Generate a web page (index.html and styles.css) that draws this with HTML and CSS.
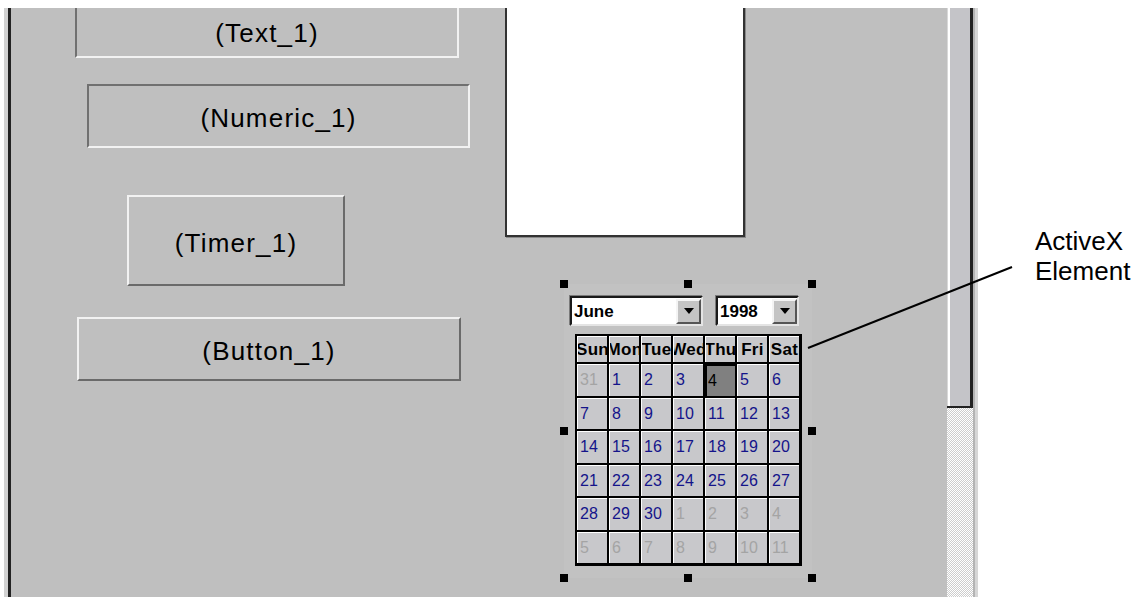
FILE: index.html
```html
<!DOCTYPE html>
<html lang="en">

<head>
    <meta charset="UTF-8">
    <meta name="viewport" content="width=device-width, initial-scale=1.0">
    <title>Form Designer</title>

    <link rel="stylesheet" href="styles.css">

</head>

<body>
    <div class="screen">
        <div class="window">
            <div class="canvas">
                <div class="control sunken text-box">(Text_1)</div>
                <div class="control sunken numeric-box">(Numeric_1)</div>
                <div class="control raised timer-box">(Timer_1)</div>
                <div class="control raised button-box">(Button_1)</div>

                <div class="picture"></div>

                <div class="activex">
                    <span class="handle h-tl"></span>
                    <span class="handle h-tc"></span>
                    <span class="handle h-tr"></span>
                    <span class="handle h-ml"></span>
                    <span class="handle h-mr"></span>
                    <span class="handle h-bl"></span>
                    <span class="handle h-bc"></span>
                    <span class="handle h-br"></span>

                    <div class="pickers">
                        <div class="combo month"><span>June</span><i class="drop"></i></div>
                        <div class="combo year"><span>1998</span><i class="drop"></i></div>
                    </div>

                    <div class="days">
                        <div class="head">Sun</div>
                        <div class="head">Mon</div>
                        <div class="head">Tue</div>
                        <div class="head">Wed</div>
                        <div class="head">Thu</div>
                        <div class="head">Fri</div>
                        <div class="head">Sat</div>

                        <div class="day other">31</div>
                        <div class="day">1</div>
                        <div class="day">2</div>
                        <div class="day">3</div>
                        <div class="day sel">4</div>
                        <div class="day">5</div>
                        <div class="day">6</div>

                        <div class="day">7</div>
                        <div class="day">8</div>
                        <div class="day">9</div>
                        <div class="day">10</div>
                        <div class="day">11</div>
                        <div class="day">12</div>
                        <div class="day">13</div>

                        <div class="day">14</div>
                        <div class="day">15</div>
                        <div class="day">16</div>
                        <div class="day">17</div>
                        <div class="day">18</div>
                        <div class="day">19</div>
                        <div class="day">20</div>

                        <div class="day">21</div>
                        <div class="day">22</div>
                        <div class="day">23</div>
                        <div class="day">24</div>
                        <div class="day">25</div>
                        <div class="day">26</div>
                        <div class="day">27</div>

                        <div class="day">28</div>
                        <div class="day">29</div>
                        <div class="day">30</div>
                        <div class="day other">1</div>
                        <div class="day other">2</div>
                        <div class="day other">3</div>
                        <div class="day other">4</div>

                        <div class="day other">5</div>
                        <div class="day other">6</div>
                        <div class="day other">7</div>
                        <div class="day other">8</div>
                        <div class="day other">9</div>
                        <div class="day other">10</div>
                        <div class="day other">11</div>
                    </div>
                </div>
            </div>

            <div class="scrollbar">
                <div class="thumb"></div>
                <div class="track"></div>
            </div>
        </div>

        <svg class="callout" width="1142" height="597" viewBox="0 0 1142 597">
            <line x1="808" y1="348" x2="1012" y2="267" stroke="#000" stroke-width="2" />
        </svg>

        <div class="label">ActiveX<br>Element</div>
    </div>
</body>

</html>
```

FILE: styles.css
```css
body {
    margin: 0;
    background: #fff;
    font-family: "Liberation Sans", Arial, sans-serif;
}

.screen {
    position: relative;
    width: 1142px;
    height: 597px;
    overflow: hidden;
}

/* designer window */
.window {
    position: absolute;
    left: 4px;
    top: 8px;
    height: 589px;
    display: flex;
    border-left: 4px solid #d2d2d2;
    border-right: 3px solid #d6d6d6;
}

.canvas {
    position: relative;
    width: 936px;
    background: #bfbfbf;
    border-left: 3px solid #222;
    overflow: hidden;
}

.control {
    position: absolute;
    box-sizing: border-box;
    display: flex;
    align-items: center;
    justify-content: center;
    padding-top: 5px;
    font-size: 26px;
    letter-spacing: 1.2px;
    color: #000;
}

.sunken {
    border: 2px solid;
    border-color: #707070 #f2f2f2 #f2f2f2 #707070;
}

.raised {
    border: 2px solid;
    border-color: #f2f2f2 #6a6a6a #6a6a6a #f2f2f2;
}

.text-box {
    left: 64px;
    top: -4px;
    width: 384px;
    height: 54px;
}

.numeric-box {
    left: 76px;
    top: 76px;
    width: 383px;
    height: 64px;
}

.timer-box {
    left: 116px;
    top: 187px;
    width: 218px;
    height: 91px;
}

.button-box {
    left: 66px;
    top: 309px;
    width: 384px;
    height: 64px;
}

.picture {
    position: absolute;
    left: 494px;
    top: -4px;
    width: 240px;
    height: 233px;
    box-sizing: border-box;
    background: #fff;
    border: 2px solid #333;
    border-top: none;
    box-shadow: 1px 1px 0 #8a8a8a;
}

/* calendar control */
.activex {
    position: absolute;
    left: 553px;
    top: 276px;
    width: 248px;
    height: 294px;
    box-sizing: border-box;
    padding: 12px 0 0 6px;
    background: #c2c2c2;
}

.handle {
    position: absolute;
    width: 8px;
    height: 8px;
    background: #000;
}

.h-tl, .h-ml, .h-bl { left: -4px; }
.h-tc, .h-bc { left: 120px; }
.h-tr, .h-mr, .h-br { left: 244px; }
.h-tl, .h-tc, .h-tr { top: -4px; }
.h-ml, .h-mr { top: 143px; }
.h-bl, .h-bc, .h-br { top: 290px; }

.pickers {
    display: flex;
    gap: 13px;
    height: 30px;
}

.combo {
    box-sizing: border-box;
    display: flex;
    align-items: center;
    background: #fff;
    border: 2px solid;
    border-color: #1a1a1a #e4e4e4 #e4e4e4 #1a1a1a;
    box-shadow: -1px -1px 0 #7a7a7a;
    font-size: 17px;
    font-weight: bold;
    color: #000;
}

.combo span {
    flex: 1;
    padding: 2px 0 0 2px;
}

.month {
    width: 133px;
}

.year {
    width: 83px;
}

.drop {
    box-sizing: border-box;
    width: 25px;
    height: 25px;
    display: flex;
    align-items: center;
    justify-content: center;
    background: #c4c4c4;
    border: 2px solid;
    border-color: #f4f4f4 #555 #555 #f4f4f4;
}

.drop::after {
    content: "";
    border-left: 5px solid transparent;
    border-right: 5px solid transparent;
    border-top: 6px solid #000;
}

.days {
    display: grid;
    grid-template-columns: repeat(7, 30px);
    grid-template-rows: 26px repeat(6, 31.5px);
    gap: 2px;
    width: 222px;
    margin: 8px 0 0 5px;
    padding: 2px 3px 3px 2px;
    background: #000;
}

.head,
.day {
    display: flex;
    align-items: center;
    overflow: hidden;
    white-space: nowrap;
    background: #c8c8cb;
    border-top: 1px solid #fff;
    border-left: 1px solid #fff;
}

.head {
    justify-content: center;
    font-size: 17px;
    font-weight: bold;
    letter-spacing: 0.3px;
    color: #000;
}

.day {
    padding-left: 2px;
    font-size: 16px;
    color: #14148a;
}

.day.other {
    color: #a4a4a4;
}

.day.sel {
    background: #808080;
    border-top: 2px solid #000;
    border-left: 2px solid #000;
    padding-left: 1px;
    color: #000;
}

/* scrollbar */
.scrollbar {
    display: flex;
    flex-direction: column;
    width: 26px;
    border-right: 2px solid #b4b4b4;
}

.thumb {
    box-sizing: border-box;
    height: 400px;
    background: #c4c4c8;
    border-right: 3px solid #222;
    border-bottom: 2px solid #222;
    box-shadow: inset 1px 0 0 #d8d8d8, inset 3px 0 0 #fff;
}

.track {
    flex: 1;
    background: repeating-conic-gradient(#fff 0 25%, #cdcdcd 0 50%) 0 0 / 2px 2px;
}

/* annotation */
.callout {
    position: absolute;
    left: 0;
    top: 0;
    pointer-events: none;
}

.label {
    position: absolute;
    left: 1035px;
    top: 226px;
    font-size: 26px;
    line-height: 30px;
    color: #000;
}
```
